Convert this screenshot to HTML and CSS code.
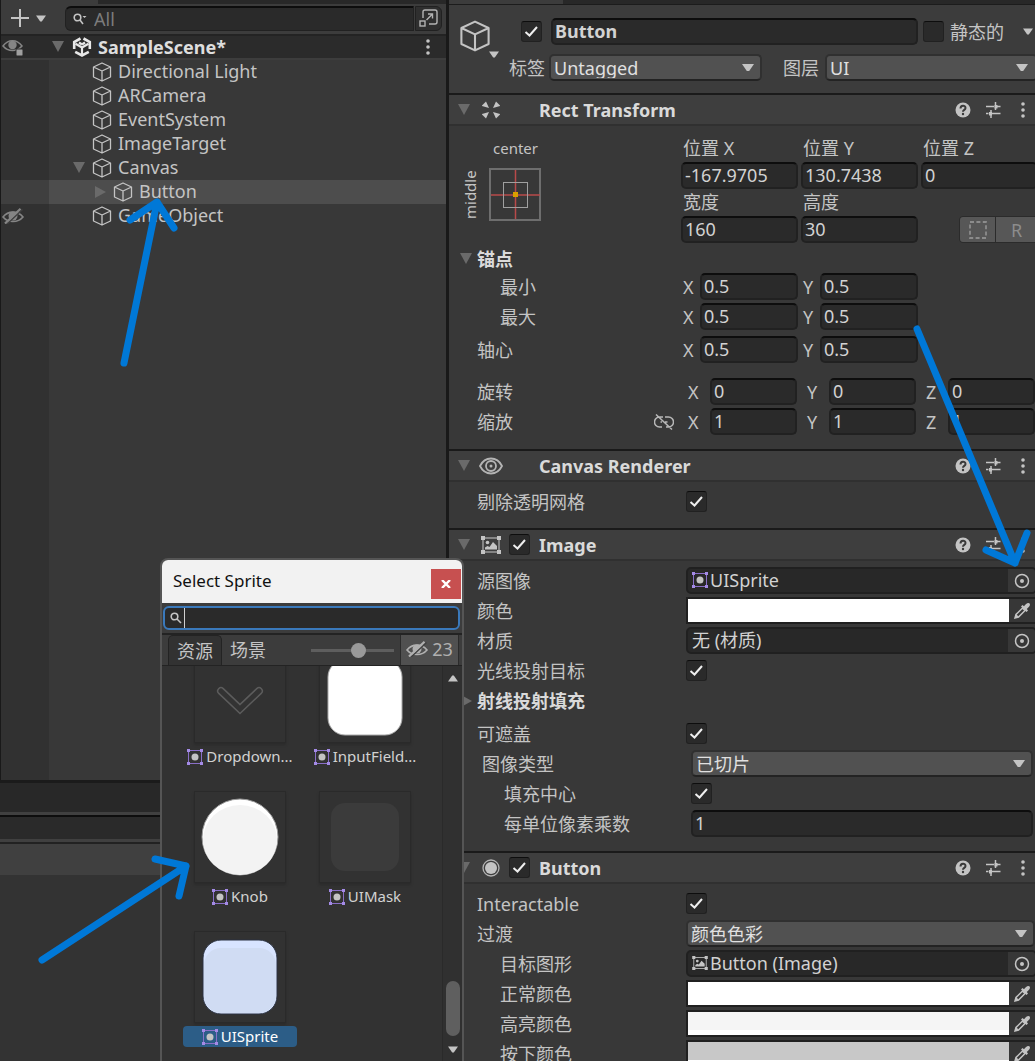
FILE: index.html
```html
<!DOCTYPE html>
<html lang="zh-CN">
<head>
<meta charset="utf-8">
<title>SampleScene</title>
<link rel="stylesheet" href="styles.css">
</head>
<body>
<svg class="defs" aria-hidden="true">
  <symbol id="cube" viewBox="0 0 20 20"><path d="M10 1 18.500 5V15L10 19 1.500 15V5ZM1.500 5 10 9 18.500 5M10 9V19" fill="none" stroke="#c4c4c4" stroke-width="1.300" stroke-linejoin="round"/></symbol>
  <symbol id="down" viewBox="0 0 12 12"><path d="M0 0H12L6 11Z" fill="#6a6a6a"/></symbol>
  <symbol id="right" viewBox="0 0 12 12"><path d="M1 0V12L12 6Z" fill="#6a6a6a"/></symbol>
  <symbol id="caret" viewBox="0 0 10 7"><path d="M0 .5H10L5.800 6.500H4.200Z" fill="#c4c4c4"/></symbol>
  <symbol id="dots" viewBox="0 0 4 16"><circle cx="2" cy="2" r="1.800"/><circle cx="2" cy="8" r="1.800"/><circle cx="2" cy="14" r="1.800"/></symbol>
  <symbol id="help" viewBox="0 0 16 16"><circle cx="8" cy="8" r="7.500" fill="#c4c4c4"/><path d="M5.500 6.500C5.500 3 10.500 3 10.500 6 10.500 8 8 7.800 8 9.800" fill="none" stroke="#3a3a3a" stroke-width="2"/><circle cx="8" cy="12" r="1.200" fill="#3a3a3a"/></symbol>
  <symbol id="preset" viewBox="0 0 16 16"><path d="M1 4.500H9M11 4.500H15.500M10.500 0V8M1 11.500H3.500M7 11.500H15.500M6 8V16" fill="none" stroke="#c4c4c4" stroke-width="1.500"/><path d="M11 3V6.500M5.500 10V13.500" stroke="#c4c4c4" stroke-width="3"/></symbol>
  <symbol id="target" viewBox="0 0 16 16"><circle cx="8" cy="8" r="6.500" fill="none" stroke="#c4c4c4" stroke-width="1.500"/><circle cx="8" cy="8" r="2" fill="#c4c4c4"/></symbol>
  <symbol id="dropper" viewBox="0 0 18 18"><path d="M2 16 3 12.500 9.500 6 12 8.500 5.500 15Z" fill="none" stroke="#c4c4c4" stroke-width="1.500"/><path d="M2 16 3 12 6 15Z" fill="#c4c4c4"/><path d="M8 4.500 9.500 3 11 4.300C12.500 2.500 14 .8 15.500 1 17.500 1.300 17.300 3.500 16 4.800L13.800 7 15 8.500 13.500 10Z" fill="#c4c4c4"/></symbol>
  <symbol id="sprite" viewBox="0 0 16 16"><rect x="1.500" y="1.500" width="13" height="13" fill="none" stroke="#8a6fc8" stroke-width="1"/><path d="M0 0H3V3H0ZM13 0H16V3H13ZM0 13H3V16H0ZM13 13H16V16H13Z" fill="#a48be6"/><circle cx="8" cy="8" r="3.500" fill="#c4c4c4"/></symbol>
  <symbol id="image" viewBox="0 0 20 18"><rect x="2" y="2" width="16" height="14" fill="none" stroke="#b5b5b5" stroke-width="1.200"/><path d="M0 0H4V4H0ZM16 0H20V4H16ZM0 14H4V18H0ZM16 14H20V18H16Z" fill="#c4c4c4"/><circle cx="6.500" cy="6.500" r="1.800" fill="#c4c4c4"/><path d="M4 13.500V11.500L6.500 10 8.500 11 12 6 16 10V13.500Z" fill="#c4c4c4"/></symbol>
  <symbol id="hidden-eye" viewBox="0 0 22 16"><path d="M1 9C6 2.500 16 2.500 21 9 16 15 6 15 1 9Z" fill="none" stroke="currentColor" stroke-width="1.600"/><circle cx="11" cy="8" r="4.500" fill="currentColor"/><path d="M4.500 16.500 20.500 1.500" stroke="#404040" stroke-width="1.500"/><path d="M3 15.500 18.500 .8" stroke="currentColor" stroke-width="2.200"/></symbol>
</svg>

<main class="editor">
  <div class="left-dock">
    <section class="hierarchy">
      <div class="tab-strip"><span class="tab-end"></span></div>
      <div class="toolbar">
        <button class="add" aria-label="Create"><svg width="18" height="18"><path d="M9 0V18M0 9H18" stroke="#c4c4c4" stroke-width="2"/></svg><svg width="10" height="7"><use href="#caret"/></svg></button>
        <label class="search">
          <svg width="14" height="12" fill="none" stroke="#c4c4c4" stroke-width="1.600"><circle cx="4.500" cy="4.500" r="3.300"/><path d="M7 7 10 11"/><path d="M9.500 3H13.500L11.500 5Z" fill="#c4c4c4" stroke="none"/></svg>
          <input type="text" placeholder="All" aria-label="Search hierarchy">
        </label>
        <button class="jump" aria-label="Open search"><svg width="20" height="20" fill="none" stroke="#b4b4b4" stroke-width="1.400"><path d="M4 10V4Q4 2 6 2H16Q18 2 18 4V14Q18 16 16 16H10"/><rect x="1" y="13" width="5" height="5"/><path d="M7.500 12 13.500 6M9 6H13.500V10.500"/></svg></button>
      </div>
      <div class="scene">
        <span class="gutter"><svg width="22" height="18"><path d="M1 8C6 1 15 1 20 8 15 14 6 14 1 8Z" fill="none" stroke="#858585" stroke-width="1.500"/><circle cx="10.500" cy="7" r="4.200" fill="#858585"/><rect x="14" y="11" width="7" height="7" rx="1" fill="#a0a0a0" stroke="#2b2b2b"/></svg></span>
        <svg class="fold" width="12" height="12"><use href="#down"/></svg>
        <svg class="kind" width="20" height="20" viewBox="0 0 20 20" fill="none" stroke="#e8e8e8" stroke-width="2.600"><path d="M8.500 1.500 2.200 5V12M11.500 1.500 17.800 5V12M3.200 14.800 10 18.500 16.800 14.800"/><path d="M10 18V10.500L3.500 6.800M10 10.500 16.500 6.800M10 7.500 7 5.500M10 7.500 13 5.500" stroke-width="2.200"/></svg>
        <strong>SampleScene*</strong>
        <button class="plain more" aria-label="Scene menu"><svg width="4" height="16" fill="#c4c4c4"><use href="#dots"/></svg></button>
      </div>
      <ul class="tree">
        <li><span class="gutter"></span><span class="fold"></span><svg class="kind" width="20" height="20"><use href="#cube"/></svg><span class="label">Directional Light</span></li>
        <li><span class="gutter"></span><span class="fold"></span><svg class="kind" width="20" height="20"><use href="#cube"/></svg><span class="label">ARCamera</span></li>
        <li><span class="gutter"></span><span class="fold"></span><svg class="kind" width="20" height="20"><use href="#cube"/></svg><span class="label">EventSystem</span></li>
        <li><span class="gutter"></span><span class="fold"></span><svg class="kind" width="20" height="20"><use href="#cube"/></svg><span class="label">ImageTarget</span></li>
        <li><span class="gutter"></span><svg class="fold" width="12" height="12"><use href="#down"/></svg><svg class="kind" width="20" height="20"><use href="#cube"/></svg><span class="label">Canvas</span></li>
        <li class="child selected"><span class="gutter"></span><svg class="fold" width="12" height="12"><use href="#right"/></svg><svg class="kind" width="20" height="20"><use href="#cube"/></svg><span class="label">Button</span></li>
        <li><span class="gutter"><svg width="22" height="16"><use href="#hidden-eye"/></svg></span><span class="fold"></span><svg class="kind" width="20" height="20"><use href="#cube"/></svg><span class="label">GameObject</span></li>
      </ul>
      <div class="tree-rest"></div>
    </section>
    <section class="console">
      <div class="console-tabs"></div>
      <div class="console-search"></div>
      <div class="console-bar"></div>
    </section>
  </div>

  <section class="inspector">
    <div class="tab-strip"><span class="tab-end"></span></div>
    <header class="object">
      <button class="plain object-icon" aria-label="Icon"><svg width="32" height="32" viewBox="0 0 20 20"><use href="#cube"/></svg><svg class="mini" width="10" height="7"><use href="#caret"/></svg></button>
      <div class="object-fields">
        <div class="object-name">
          <input type="checkbox" checked aria-label="Active">
          <input class="field bold" type="text" value="Button" aria-label="Name">
          <input type="checkbox" id="static"><label for="static">静态的</label>
          <button class="plain static-menu" aria-label="Static flags"><svg width="10" height="7"><use href="#caret"/></svg></button>
        </div>
        <div class="object-tags">
          <label for="tag">标签</label><span class="select"><select id="tag"><option>Untagged</option></select></span>
          <label class="layer" for="layer">图层</label><span class="select layer-select"><select id="layer"><option>UI</option></select></span>
        </div>
      </div>
    </header>

    <article class="component">
      <header class="bar">
        <svg class="fold" width="12" height="12"><use href="#down"/></svg>
        <span class="type"><svg width="18" height="18" fill="#c4c4c4"><path d="M0 4.500 4 .5 7 7 0 5ZM18 4.500 14 .5 11 7 18 5ZM0 13.500 4 17.500 7 11 0 13ZM18 13.500 14 17.500 11 11 18 13Z"/></svg></span>
        <span class="enable"></span><h2>Rect Transform</h2>
        <span class="tools"><button class="plain" aria-label="Help"><svg width="16" height="16"><use href="#help"/></svg></button><button class="plain" aria-label="Presets"><svg width="16" height="16"><use href="#preset"/></svg></button><button class="plain" aria-label="Menu"><svg width="4" height="16" fill="#c4c4c4"><use href="#dots"/></svg></button></span>
      </header>
      <div class="rect">
        <div class="rect-top">
          <div class="anchor">
            <span class="across">center</span>
            <span class="along">middle</span>
            <button class="plain" aria-label="Anchor presets"><svg width="53" height="53" fill="none"><rect x="1" y="1" width="50" height="51" stroke="#6e6e6e" stroke-width="2"/><path d="M2 27H51M26.500 2V51" stroke="#b84a4a" stroke-width="1.500"/><rect x="14.500" y="14.500" width="24" height="25" stroke="#a0a0a0"/><rect x="24" y="24" width="5" height="5" fill="#d8a000"/></svg></button>
          </div>
          <div class="rect-grid">
            <label for="px">位置 X</label><label for="py">位置 Y</label><label for="pz">位置 Z</label>
            <input class="field" id="px" value="-167.9705"><input class="field" id="py" value="130.7438"><input class="field" id="pz" value="0">
            <label for="w">宽度</label><label for="h">高度</label><span></span>
            <input class="field" id="w" value="160"><input class="field" id="h" value="30">
            <span class="modes"><button aria-label="Blueprint mode"><svg width="18" height="18"><rect x="1" y="1" width="16" height="16" fill="none" stroke="#8c8c8c" stroke-width="1.800" stroke-dasharray="4 2.400"/></svg></button><button>R</button></span>
          </div>
        </div>
        <button class="plain group"><svg width="12" height="12"><use href="#down"/></svg>锚点</button>
        <div class="vec deep"><span class="name">最小</span><div class="axes"><label>X<input class="field" value="0.5"></label><label>Y<input class="field" value="0.5"></label></div></div>
        <div class="vec deep"><span class="name">最大</span><div class="axes"><label>X<input class="field" value="0.5"></label><label>Y<input class="field" value="0.5"></label></div></div>
        <div class="vec spaced"><span class="name">轴心</span><div class="axes"><label>X<input class="field" value="0.5"></label><label>Y<input class="field" value="0.5"></label></div></div>
        <div class="vec apart"><span class="name">旋转</span><div class="axes wide"><label>X<input class="field" value="0"></label><label>Y<input class="field" value="0"></label><label>Z<input class="field" value="0"></label></div></div>
        <div class="vec"><span class="name">缩放<svg width="20" height="16" fill="none" stroke="#b8b8b8" stroke-width="1.500"><path d="M9 3H5.500A4.500 4.500 0 0 0 5.500 13H8M11 3H14.500A4.500 4.500 0 0 1 14.500 13H12M6.500 8H8M11 8H13.500M2 .5 18 15.500"/></svg></span><div class="axes wide"><label>X<input class="field" value="1"></label><label>Y<input class="field" value="1"></label><label>Z<input class="field" value="1"></label></div></div>
      </div>
    </article>

    <article class="component">
      <header class="bar">
        <svg class="fold" width="12" height="12"><use href="#down"/></svg>
        <span class="type"><svg width="24" height="18" fill="none" stroke="#b4b4b4" stroke-width="1.800"><path d="M1 9C6 -1 18 -1 23 9 18 19 6 19 1 9Z"/><circle cx="12" cy="9" r="5"/><circle cx="12" cy="9" r="1.500" fill="#b4b4b4" stroke="none"/></svg></span>
        <span class="enable"></span><h2>Canvas Renderer</h2>
        <span class="tools"><button class="plain" aria-label="Help"><svg width="16" height="16"><use href="#help"/></svg></button><button class="plain" aria-label="Presets"><svg width="16" height="16"><use href="#preset"/></svg></button><button class="plain" aria-label="Menu"><svg width="4" height="16" fill="#c4c4c4"><use href="#dots"/></svg></button></span>
      </header>
      <div class="props tight">
        <div class="prop"><label for="cull">剔除透明网格</label><input type="checkbox" id="cull" checked></div>
      </div>
    </article>

    <article class="component">
      <header class="bar">
        <svg class="fold" width="12" height="12"><use href="#down"/></svg>
        <span class="type"><svg width="20" height="18"><use href="#image"/></svg></span>
        <span class="enable"><input type="checkbox" checked aria-label="Image enabled"></span><h2>Image</h2>
        <span class="tools"><button class="plain" aria-label="Help"><svg width="16" height="16"><use href="#help"/></svg></button><button class="plain" aria-label="Presets"><svg width="16" height="16"><use href="#preset"/></svg></button><button class="plain" aria-label="Menu"><svg width="4" height="16" fill="#c4c4c4"><use href="#dots"/></svg></button></span>
      </header>
      <div class="props">
        <div class="prop"><span>源图像</span><div class="ref"><span><svg width="16" height="16"><use href="#sprite"/></svg>UISprite</span><button aria-label="选择源图像"><svg width="16" height="16"><use href="#target"/></svg></button></div></div>
        <div class="prop"><label for="c0">颜色</label><div class="color"><input type="color" id="c0" value="#ffffff"><button aria-label="取色"><svg width="18" height="18"><use href="#dropper"/></svg></button></div></div>
        <div class="prop"><span>材质</span><div class="ref"><span>无 (材质)</span><button aria-label="选择材质"><svg width="16" height="16"><use href="#target"/></svg></button></div></div>
        <div class="prop"><label for="ray">光线投射目标</label><input type="checkbox" id="ray" checked></div>
        <button class="plain group"><svg width="12" height="12"><use href="#right"/></svg>射线投射填充</button>
        <div class="prop raised"><label for="mask">可遮盖</label><input type="checkbox" id="mask" checked></div>
        <div class="prop nested"><label for="itype">图像类型</label><span class="select"><select id="itype"><option>已切片</option></select></span></div>
        <div class="prop nested deep"><label for="fill">填充中心</label><input type="checkbox" id="fill" checked></div>
        <div class="prop nested deep"><label for="ppu">每单位像素乘数</label><input class="field" id="ppu" value="1"></div>
      </div>
    </article>

    <article class="component">
      <header class="bar">
        <svg class="fold" width="12" height="12"><use href="#down"/></svg>
        <span class="type"><svg width="18" height="18"><circle cx="9" cy="9" r="8" fill="none" stroke="#b4b4b4" stroke-width="1.300"/><circle cx="9" cy="9" r="6" fill="#c4c4c4"/></svg></span>
        <span class="enable"><input type="checkbox" checked aria-label="Button enabled"></span><h2>Button</h2>
        <span class="tools"><button class="plain" aria-label="Help"><svg width="16" height="16"><use href="#help"/></svg></button><button class="plain" aria-label="Presets"><svg width="16" height="16"><use href="#preset"/></svg></button><button class="plain" aria-label="Menu"><svg width="4" height="16" fill="#c4c4c4"><use href="#dots"/></svg></button></span>
      </header>
      <div class="props">
        <div class="prop"><label for="inter">Interactable</label><input type="checkbox" id="inter" checked></div>
        <div class="prop"><label for="trans">过渡</label><span class="select"><select id="trans"><option>颜色色彩</option></select></span></div>
        <div class="prop deep"><span>目标图形</span><div class="ref"><span><svg width="16" height="14"><use href="#image"/></svg>Button (Image)</span><button aria-label="选择目标图形"><svg width="16" height="16"><use href="#target"/></svg></button></div></div>
        <div class="prop deep"><label for="c1">正常颜色</label><div class="color"><input type="color" id="c1" value="#ffffff"><button aria-label="取色"><svg width="18" height="18"><use href="#dropper"/></svg></button></div></div>
        <div class="prop deep"><label for="c2">高亮颜色</label><div class="color"><input type="color" id="c2" value="#f5f5f5"><button aria-label="取色"><svg width="18" height="18"><use href="#dropper"/></svg></button></div></div>
        <div class="prop deep"><label for="c3">按下颜色</label><div class="color"><input type="color" id="c3" value="#c8c8c8"><button aria-label="取色"><svg width="18" height="18"><use href="#dropper"/></svg></button></div></div>
      </div>
    </article>
  </section>
</main>

<section class="picker" role="dialog" aria-labelledby="picker-title">
  <header><h1 id="picker-title">Select Sprite</h1><button aria-label="Close"><svg width="10" height="8"><path d="M1 0 9 8M9 0 1 8" stroke="#fff" stroke-width="2.400"/></svg></button></header>
  <div class="picker-search"><label><svg width="12" height="12" fill="none" stroke="#c4c4c4" stroke-width="1.600"><circle cx="4.500" cy="4.500" r="3.300"/><path d="M7 7 11 11"/></svg><i class="cursor"></i><input type="text" aria-label="Search sprites"></label></div>
  <nav class="picker-tabs">
    <button class="current">资源</button><button>场景</button>
    <input type="range" min="0" max="100" value="59" aria-label="Thumbnail size">
    <button class="count"><svg width="22" height="16"><use href="#hidden-eye"/></svg>23</button>
  </nav>
  <div class="picker-body">
    <div class="thumbs">
      <button class="thumb"><svg width="92" height="92"><path d="M27 40 46 58 65 40" fill="none" stroke="#5c5c5c" stroke-width="8" stroke-linecap="round"/><path d="M27 40 46 58 65 40" fill="none" stroke="#333" stroke-width="5" stroke-linecap="round"/></svg><span><svg width="16" height="16"><use href="#sprite"/></svg>Dropdown...</span></button>
      <button class="thumb"><svg width="92" height="92"><rect x="9" y="9" width="74" height="75" rx="17" fill="#fff" stroke="#aaa"/></svg><span><svg width="16" height="16"><use href="#sprite"/></svg>InputField...</span></button>
      <button class="thumb"><svg width="92" height="92"><circle cx="46" cy="46" r="38" fill="#fff" stroke="#999"/><ellipse cx="46" cy="49" rx="37" ry="35" fill="#f3f3f3"/></svg><span><svg width="16" height="16"><use href="#sprite"/></svg>Knob</span></button>
      <button class="thumb"><svg width="92" height="92"><rect x="12" y="12" width="68" height="68" rx="14" fill="#3b3b3b"/></svg><span><svg width="16" height="16"><use href="#sprite"/></svg>UIMask</span></button>
      <button class="thumb chosen"><svg width="92" height="92"><rect x="9" y="9" width="74" height="74" rx="18" fill="#d8e4ff" stroke="#2a3140" stroke-width="1"/><rect x="10" y="17" width="72" height="65" rx="17" fill="#d0dcf3"/></svg><span><svg width="16" height="16"><use href="#sprite"/></svg>UISprite</span></button>
    </div>
    <div class="scroll"><svg class="up" width="10" height="7"><use href="#caret"/></svg><i></i><svg width="10" height="7"><use href="#caret"/></svg></div>
  </div>
</section>

<svg class="arrows" aria-hidden="true"><path d="M124 363 157 202M130 220 157 202 174 228M917 329 1015 563M986 550 1015 563 1027 533M42 960 186 866M155 859 186 866 179 896"/></svg>
</body>
</html>
```
FILE: styles.css
```css
* { box-sizing: border-box; }

body {
  margin: 0;
  background: #191919;
  color: #c4c4c4;
  font: 18px/24px "Noto Sans", "Noto Sans CJK SC", sans-serif;
}

button, input, select { font: inherit; color: inherit; margin: 0; }
button { padding: 0; border: 0; }
svg { display: block; flex: none; }
.defs { display: none; }
.plain { background: none; display: flex; align-items: center; justify-content: center; }

.editor {
  display: grid;
  grid-template-columns: 446px minmax(0, 1fr);
  gap: 3px;
  height: 100vh;
  overflow: hidden;
}

.tab-strip { display: flex; height: 4px; background: #282828; }
.tab-end { background: #3c3c3c; width: 97px; }

/* Hierarchy */
.left-dock { display: flex; flex-direction: column; min-height: 0; }
.hierarchy { flex: 1; display: flex; flex-direction: column; padding-left: 1px; min-height: 0; }
.toolbar {
  display: flex;
  align-items: center;
  height: 32px;
  padding: 0 4px 2px 10px;
  background: #3c3c3c;
  border-bottom: 2px solid #232323;
}
.add { display: flex; align-items: center; gap: 7px; background: none; width: 54px; }
.search {
  flex: 1;
  display: flex;
  align-items: center;
  gap: 7px;
  height: 25px;
  padding-left: 7px;
  background: #2a2a2a;
  border: 1px solid #212121;
  border-top: 2px solid #0d0d0d;
  border-radius: 6px 0 0 6px;
}
.search input { flex: 1; min-width: 0; background: none; border: 0; padding: 0; outline: 0; }
.search input::placeholder { color: #7c7c7c; }
.jump {
  display: flex;
  align-items: center;
  justify-content: center;
  width: 27px;
  height: 25px;
  margin-left: 1px;
  background: #2f2f2f;
  border: 1px solid #212121;
  border-radius: 0 6px 6px 0;
}
.scene { display: flex; align-items: center; height: 24px; background: #2b2b2b; border-bottom: 2px solid #3d3d3d; }
.gutter { width: 48px; flex: none; padding-left: 1px; color: #858585; align-self: stretch; display: flex; align-items: center; }
.scene .gutter { margin-right: 3px; }
.fold { width: 12px; flex: none; }
.kind { margin: 0 6px 0 8px; }
.tree .kind { margin-left: 7px; }
.scene strong { flex: 1; color: #dedede; }
.more { width: 36px; }
.tree { list-style: none; margin: 0; padding: 0; background: #383838; }
.tree li { display: flex; align-items: center; height: 24px; }
.tree .label { padding-bottom: 2px; }
.tree .gutter { background: #313131; margin-right: 24px; }
.tree .child .gutter { margin-right: 45px; }
.tree .selected { background: #4d4d4d; }
.tree .selected .gutter { background: #3f3f3f; }
.tree-rest { flex: 1; background: linear-gradient(90deg, #313131 48px, #383838 48px); }

.console { height: 281px; background: #333; border-top: 3px solid #1b1b1b; }
.console-tabs { height: 32px; background: #282828; border-bottom: 3px solid #404040; }
.console-search { height: 27px; background: #2a2a2a; border-top: 2px solid #0d0d0d; border-bottom: 3px solid #404040; }
.console-bar { height: 33px; background: #404040; border-top: 2px solid #222; }

/* Shared controls */
.field {
  width: 100%;
  min-width: 0;
  height: 27px;
  padding: 0 2px 2px;
  background: #2a2a2a;
  border: 2px solid #212121;
  border-top-color: #0d0d0d;
  border-radius: 5px;
  color: #d2d2d2;
  outline: 0;
}
.bold { font-weight: bold; }
input[type="checkbox"] {
  appearance: none;
  flex: none;
  width: 21px;
  height: 21px;
  background: #2a2a2a center / 17px 17px no-repeat;
  border: 1px solid #212121;
  border-top-color: #0d0d0d;
  border-radius: 3px;
}
input[type="checkbox"]:checked {
  background-image: url("data:image/svg+xml,%3Csvg xmlns='http://www.w3.org/2000/svg' viewBox='0 0 17 17'%3E%3Cpath d='M2.500 9 6.500 12.500 14 4' fill='none' stroke='%23eee' stroke-width='2'/%3E%3C/svg%3E");
}
.select { display: grid; align-items: center; min-width: 0; height: 27px; }
.select::after {
  content: "";
  grid-area: 1 / 1;
  justify-self: end;
  width: 12px;
  height: 7px;
  margin-right: 8px;
  background: #c4c4c4;
  clip-path: polygon(0 0, 100% 0, 60% 100%, 40% 100%);
  pointer-events: none;
}
.select select {
  grid-area: 1 / 1;
  appearance: none;
  width: 100%;
  height: 27px;
  padding: 0 3px 1px;
  background: #515151;
  border: 2px solid #303030;
  border-bottom-color: #232323;
  border-radius: 5px;
  color: #e0e0e0;
}

/* Inspector */
.inspector { background: #383838; overflow: hidden; min-height: 0; }
.inspector .tab-strip { height: 5px; border-bottom: 1px solid #1c1c1c; }
.inspector .tab-end { width: 114px; }
.object { display: flex; padding: 13px 0 12px; background: #3c3c3c; }
.object-icon { width: 60px; height: 40px; padding: 2px 0 0 10px; justify-content: flex-start; align-items: flex-start; flex: none; }
.object-icon .mini { align-self: flex-end; margin-left: -2px; }
.object-fields { flex: 1; min-width: 0; display: flex; flex-direction: column; gap: 9px; }
.object-name, .object-tags { display: flex; align-items: center; }
.object-name { padding: 0 2px 0 12px; }
.object-name .field { flex: 1; margin: 0 5px 0 9px; }
.object-name label { margin-left: 6px; }
.static-menu { margin-left: 19px; }
.object-tags { gap: 4px; margin-right: -3px; }
.object-tags .select { flex: 1; }
.object-tags .layer { margin: 0 2px 0 17px; }
.layer-select::after { margin-right: 10px; }

.component { border-top: 2px solid #1a1a1a; }
.bar { display: flex; align-items: center; height: 31px; padding-left: 9px; background: #3e3e3e; border-bottom: 2px solid #303030; }
.bar .type { width: 20px; margin: 0 8px 0 11px; display: flex; justify-content: center; flex: none; }
.bar .enable { width: 21px; margin-right: 9px; flex: none; display: flex; }
.bar h2 { margin: 0; flex: 1; font-size: 18px; line-height: 24px; color: #dadada; }
.tools { display: flex; margin-right: -3px; }
.tools button { width: 30px; height: 24px; }

.rect { padding: 9px 0 12px; }
.rect-top { display: flex; }
.anchor {
  width: 232px;
  padding-left: 12px;
  display: grid;
  grid-template: 24px 53px / 28px 53px;
  gap: 9px 0;
  align-content: start;
  font-size: 15px;
  flex: none;
}
.across { grid-column: 2; text-align: center; line-height: 27px; }
.along { writing-mode: vertical-rl; rotate: 180deg; text-align: center; line-height: 18px; justify-self: start; }
.rect-grid, .axes { flex: 1; min-width: 0; margin-right: -3px; display: grid; grid-template-columns: repeat(3, minmax(0, 1fr)); column-gap: 3px; }
.rect-grid label { padding-left: 2px; line-height: 27px; }
.rect-grid .field { height: 27px; }
.modes { display: flex; gap: 1px; margin-left: 38px; height: 27px; background: #2b2b2b; border: 1px solid #2b2b2b; border-radius: 4px; overflow: hidden; }
.modes button { flex: 1; display: flex; align-items: center; justify-content: center; background: #575757; color: #8c8c8c; }
.modes button:first-child { flex: none; width: 35px; }

.group { width: 100%; height: 29px; padding-left: 11px; gap: 5px; justify-content: flex-start; font-weight: bold; color: #dadada; }
.rect .group { padding-top: 3px; }
.vec { display: flex; align-items: center; height: 30px; padding: 1px 0 2px; }
.name { width: 232px; flex: none; padding: 0 7px 0 28px; display: flex; justify-content: space-between; align-items: center; }
.deep .name { padding-left: 51px; }
.axes label { display: flex; align-items: center; padding-left: 2px; }
.axes .field { margin-left: auto; width: calc(100% - 17px); }
.axes.wide { margin-right: 0; }
.axes.wide label { padding-left: 7px; }
.axes.wide .field { width: calc(100% - 22px); }
.spaced { margin-top: 3px; }
.apart { margin-top: 12px; }
.raised { margin-top: 4px; }

.props { padding: 5px 0 12px; }
.props.tight { padding-bottom: 11px; }
.prop { display: grid; grid-template-columns: 209px minmax(0, 1fr); align-items: center; height: 30px; padding: 1px 0 2px 28px; }
.prop.deep > :first-child { padding-left: 23px; }
.prop.nested { padding: 1px 2px 2px 33px; }
.prop.nested.deep > :first-child { padding-left: 22px; }

.ref, .color { display: flex; height: 27px; margin-right: -2px; background: #282828; border: 2px solid #202020; border-radius: 5px; overflow: hidden; }
.ref span { flex: 1; display: flex; align-items: center; gap: 2px; padding: 0 0 1px 4px; color: #d2d2d2; }
.ref button, .color button { width: 27px; flex: none; display: flex; align-items: center; justify-content: center; background: #373737; }
.color { border-radius: 0; }
.color button { width: 26px; }
.color input { appearance: none; flex: 1; min-width: 0; height: 100%; padding: 0 0 5px; border: 0; background: #fff; }
.color input::-webkit-color-swatch-wrapper { padding: 0; }
.color input::-webkit-color-swatch { border: 0; border-radius: 0; }

/* Floating sprite picker */
.picker {
  position: absolute;
  left: 160px;
  top: 558px;
  bottom: 0;
  width: 304px;
  display: flex;
  flex-direction: column;
  background: #323232;
  border: 2px solid #555;
  border-bottom: 0;
  border-radius: 8px 8px 0 0;
  overflow: hidden;
}
.picker header { display: flex; justify-content: space-between; height: 43px; background: #f2f2f2; color: #111; }
.picker h1 { margin: 0; padding-left: 11px; font-size: 17px; font-weight: normal; line-height: 42px; }
.picker header button { width: 30px; height: 30px; margin: 9px 1px 0 0; background: #c75050; display: flex; align-items: center; justify-content: center; }
.picker-search { height: 32px; padding: 3px 2px 0 1px; background: #3c3c3c; border-bottom: 2px solid #232323; }
.picker-search label { display: flex; align-items: center; height: 24px; padding-left: 5px; background: #2a2a2a; border: 2px solid #3a79bb; border-radius: 6px; }
.picker-search input { flex: 1; min-width: 0; background: none; border: 0; outline: 0; }
.cursor { width: 1px; height: 20px; margin-left: 2px; background: #d0d0d0; }
.picker-tabs { display: flex; align-items: center; height: 31px; padding: 0 3px 0 6px; background: #3c3c3c; border-bottom: 1px solid #232323; }
.picker-tabs button { height: 30px; background: none; padding: 0 8px; }
.picker-tabs .current { background: #323232; border: 1px solid #232323; border-width: 1px 1px 0; border-radius: 5px 5px 0 0; }
.picker-tabs input { appearance: none; flex: 1; min-width: 0; height: 15px; margin: 0 6px 0 37px; background: linear-gradient(#5e5e5e, #5e5e5e) center / 100% 3px no-repeat; }
.picker-tabs input::-webkit-slider-thumb { appearance: none; width: 15px; height: 15px; border-radius: 50%; background: #999; }
.picker-tabs .count { width: 59px; padding: 0 0 3px; background: #505050; border: 1px solid #2b2b2b; border-width: 0 1px; color: #b0b0b0; display: flex; align-items: center; justify-content: center; gap: 4px; }
.picker-body { flex: 1; min-height: 0; display: flex; }
.thumbs {
  flex: 1;
  display: grid;
  grid-template-columns: 114px 114px;
  gap: 24px 11px;
  align-content: end;
  padding: 0 0 14px 21px;
  overflow: hidden;
}
.thumb { display: flex; flex-direction: column; align-items: center; gap: 3px; background: none; font-size: 15px; line-height: 21px; color: #d2d2d2; }
.thumb > svg { outline: 1px solid #2a2a2a; outline-offset: -1px; box-shadow: 0 2px 2px #2b2b2b; }
.thumb span { display: flex; align-items: center; justify-content: center; gap: 3px; width: 114px; height: 21px; border-radius: 4px; }
.chosen span { background: #2c5d87; color: #fff; }
.scroll { width: 20px; display: flex; flex-direction: column; align-items: center; padding: 9px 0 8px; background: #303030; border-left: 1px solid #2a2a2a; }
.scroll .up { rotate: 180deg; }
.scroll i { width: 14px; height: 55px; margin: auto 0 10px; border-radius: 7px; background: #5f5f5f; }

/* Annotation strokes drawn over the editor */
.arrows { position: absolute; inset: 0; width: 100%; height: 100%; pointer-events: none; fill: none; stroke: #0078d7; stroke-width: 7; stroke-linecap: round; stroke-linejoin: round; }
```
